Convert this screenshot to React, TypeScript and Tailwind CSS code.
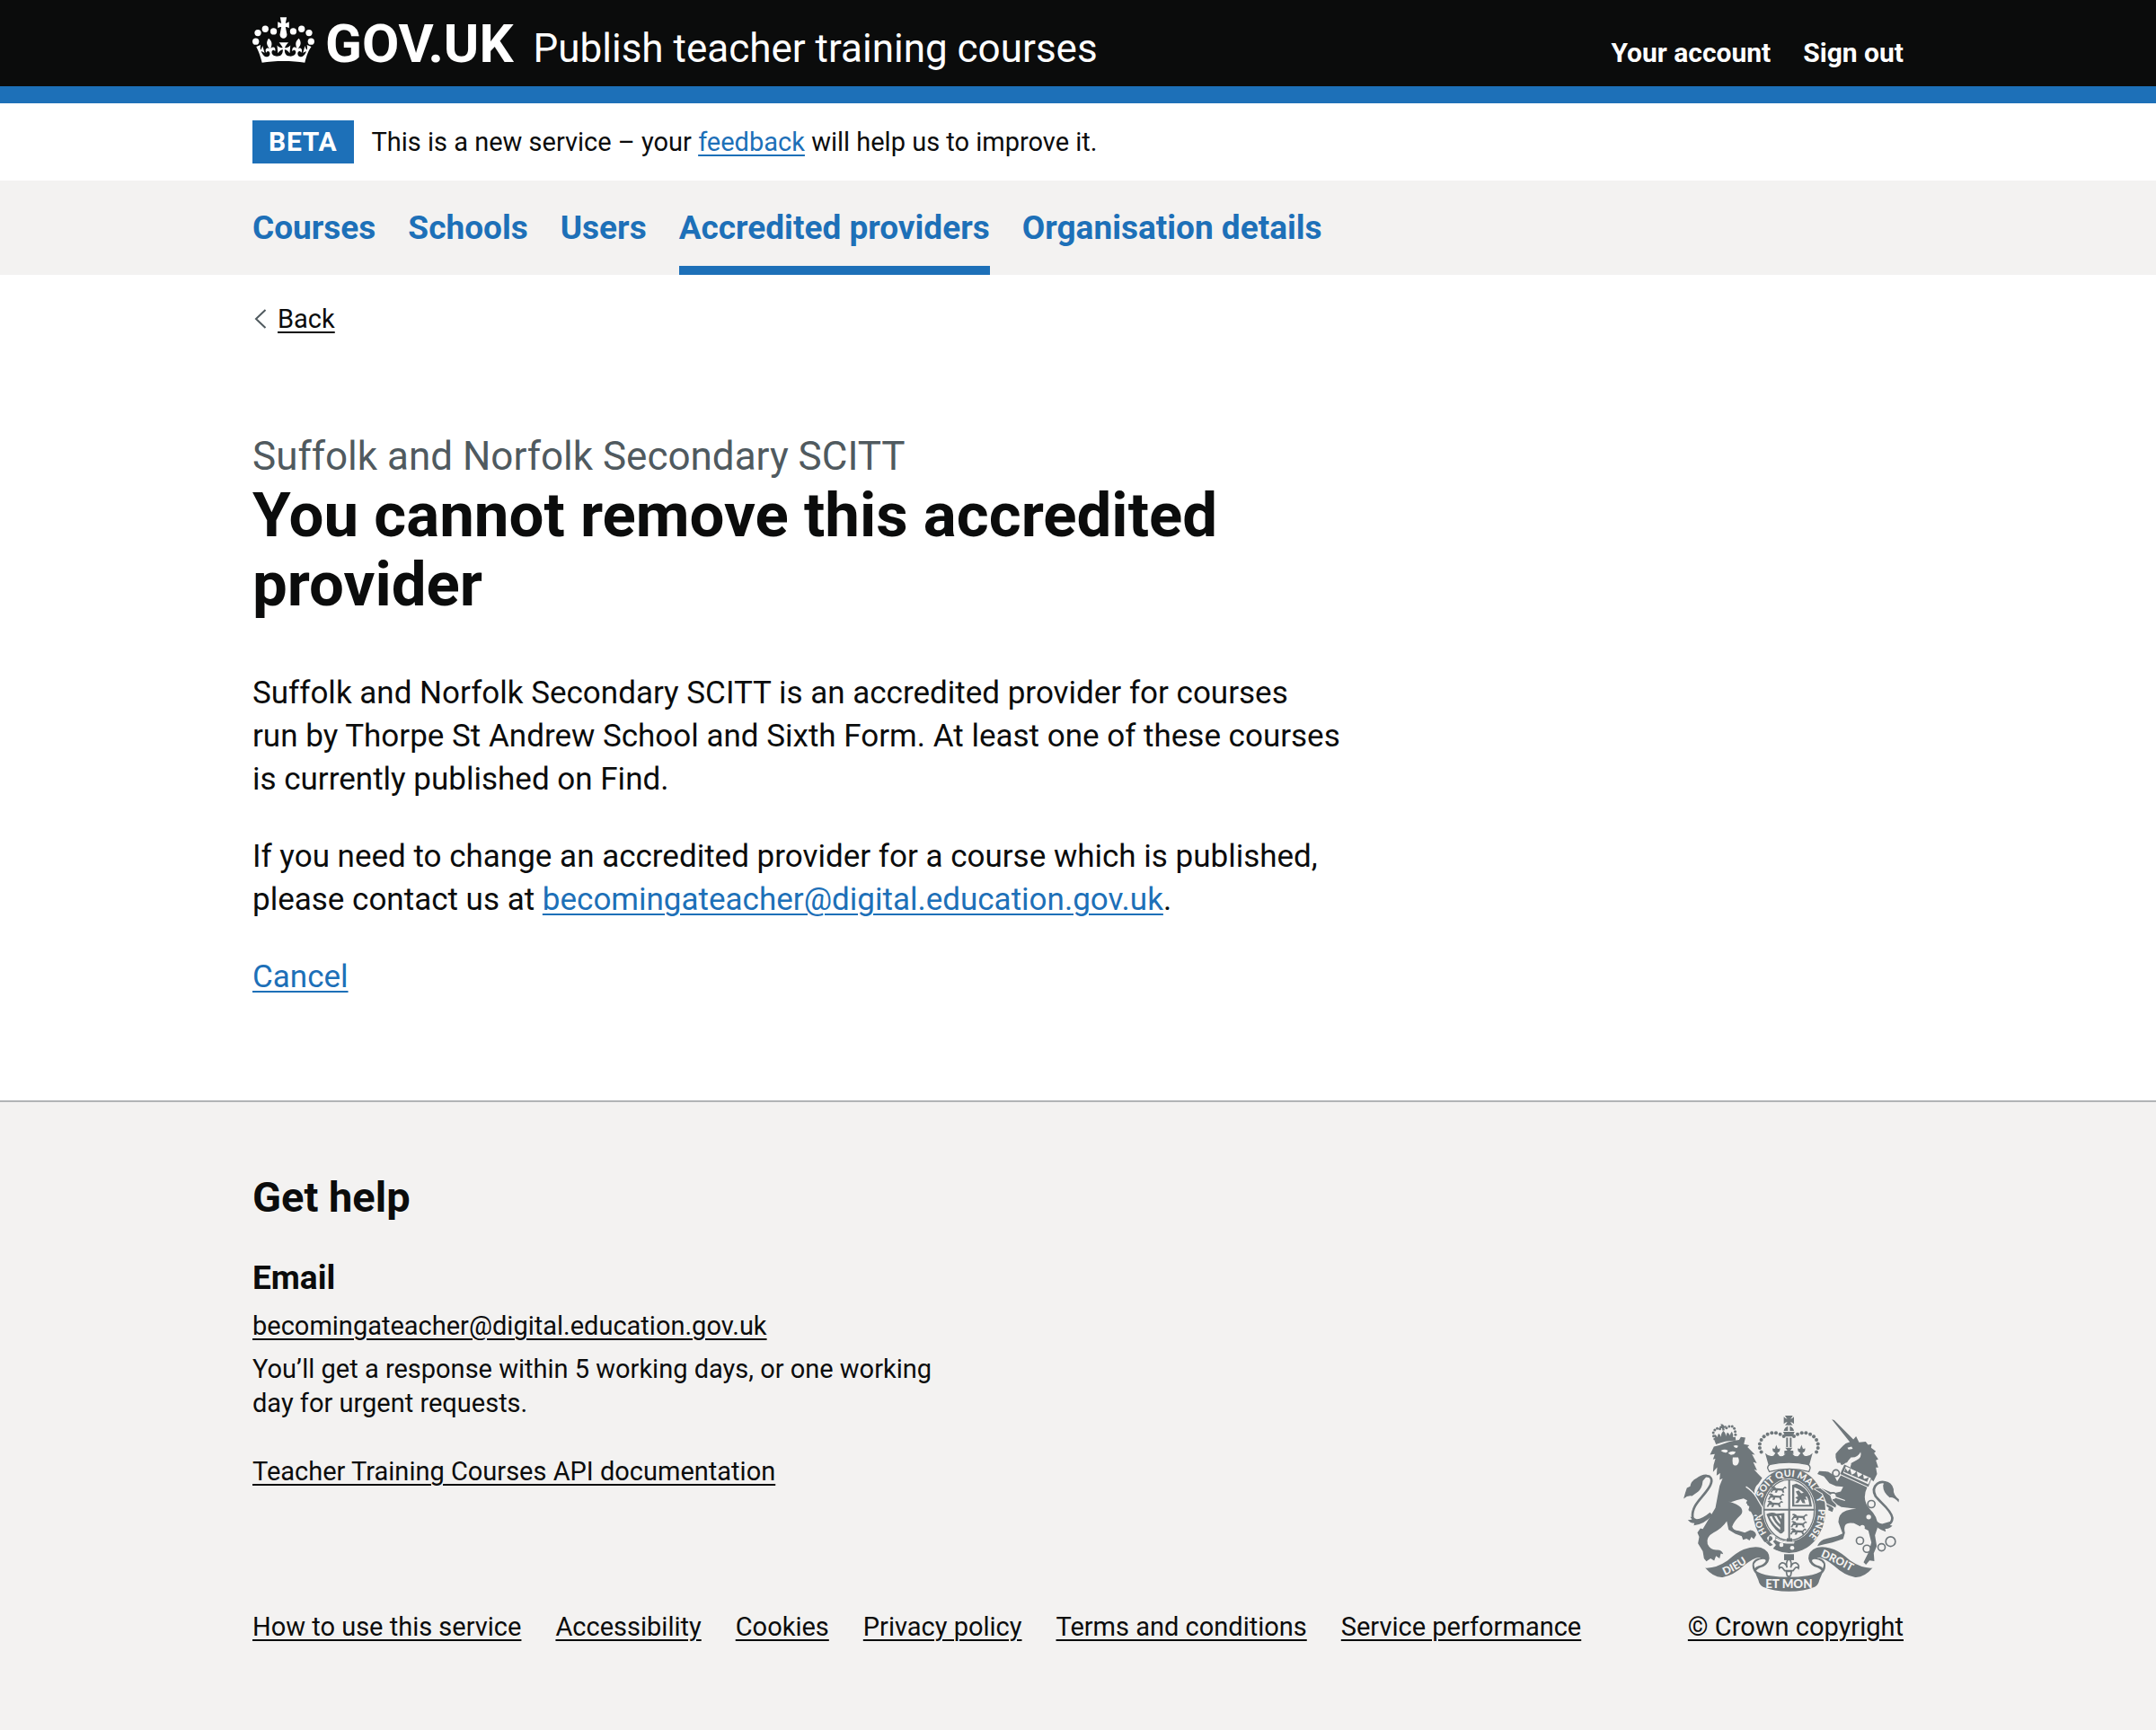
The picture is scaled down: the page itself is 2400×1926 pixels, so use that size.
import type { ReactNode } from "react";

const EMAIL = "becomingateacher@digital.education.gov.uk";

const NAV = [
  { label: "Courses" },
  { label: "Schools" },
  { label: "Users" },
  { label: "Accredited providers", current: true },
  { label: "Organisation details" },
];

const FOOTER_LINKS = [
  "How to use this service",
  "Accessibility",
  "Cookies",
  "Privacy policy",
  "Terms and conditions",
  "Service performance",
];

function Container({ children, className = "" }: { children: ReactNode; className?: string }) {
  return <div className={`mx-auto w-full max-w-[1838px] ${className}`}>{children}</div>;
}

function CrownLogo({ className = "" }: { className?: string }) {
  const pearls = [
    [43, 111],
    [50, 82],
    [75, 69],
    [103, 77],
  ];
  return (
    <svg viewBox="32 29 208 154" className={className} fill="currentColor" role="img" aria-label="Crown">
      {pearls.map(([x, y]) => (
        <g key={x}>
          <circle cx={x} cy={y} r="11" />
          <circle cx={272 - x} cy={y} r="11" />
        </g>
      ))}
      <path d="M125 30h22l-4 20q6-1 12-5v21q-6-4-12-4l5 26a12 13 0 1 1-24 0l5-26q-6 0-12 4V45q6 4 12 5z" />
      <g transform="translate(42.4 -1) scale(5.85 6.1)">
        <path d="M16 29.2c4.4 0 8.6.3 12.3.8 1.1-4.5 2.4-7 3.7-8.8l-2.5-.9c.2 1.3.3 1.9 0 2.7-.4-.4-.8-1.1-1.1-2.3l-1.2 4c.7-.5 1.3-.8 2-.9-1.1 2.5-2.6 3.1-3.5 3-1.1-.2-1.7-1.2-1.5-2.1.3-1.2 1.5-1.5 2.1-.1 1.1-2.3-.8-3-2-2.3 1.9-1.9 2.1-3.5.6-5.6-2.1 1.6-2.1 3.2-1.2 5.5-1.2-1.4-3.2-.6-2.5 1.6.9-1.4 2.1-.5 1.9.8-.2 1.1-1.7 2.1-3.5 1.9-2.7-.2-2.9-2.1-2.9-3.6.7-.1 1.9.5 2.9 1.9l.4-4.3c-1.1 1.1-2.1 1.4-3.2 1.4.4-1.2 2.1-3 2.1-3h-5.4s1.7 1.9 2.1 3c-1.1 0-2.1-.2-3.2-1.4l.4 4.3c1-1.4 2.2-2 2.9-1.9-.1 1.5-.2 3.4-2.9 3.6-1.9.2-3.4-.8-3.5-1.9-.2-1.3 1-2.2 1.9-.8.7-2.3-1.2-3-2.5-1.6.9-2.2.9-3.9-1.2-5.5-1.5 2-1.3 3.7.6 5.6-1.2-.7-3.1 0-2 2.3.6-1.4 1.8-1.1 2.1.1.2.9-.3 1.9-1.5 2.1-.9.2-2.4-.5-3.5-3 .6 0 1.2.3 2 .9l-1.2-4c-.3 1.1-.7 1.9-1.1 2.3-.3-.8-.2-1.4 0-2.7l-2.5.9C1.3 23 2.6 25.5 3.7 30c3.7-.5 7.9-.8 12.3-.8z" />
      </g>
    </svg>
  );
}

const G = "#6f777b";
const L = "#f3f2f1";

/* One heraldic beast passant, reused for the quarterings of the shield. */
function Passant({ x, y }: { x: number; y: number }) {
  return (
    <path
      transform={`translate(${x} ${y})`}
      d="M0 2l6-2 7 3 3 4 22 1 8-7 6 4-3 3-4-1-4 6 3 9h-6l-3-7-13-1-3 8h-7l3-8-9 1-4 7-5-2 6-10 3-4-5-1z"
    />
  );
}

function RoyalArms({ className = "" }: { className?: string }) {
  const arch = [
    [376, 122], [364, 115], [350, 111], [336, 111], [322, 115], [310, 123],
    [301, 134], [296, 147], [296, 161], [301, 174],
  ];
  const smallArch = [
    [146, 131], [142, 121], [141, 110], [146, 101], [154, 96], [163, 97],
    [185, 94], [194, 89], [204, 89], [211, 96], [214, 106], [215, 117],
  ];
  const links = [
    [550, 245, 11], [540, 322, 12], [668, 348, 12], [630, 470, 12], [653, 497, 12], [702, 492, 12], [732, 473, 16],
  ];
  return (
    <svg
      viewBox="42 50 718 590"
      className={`overflow-visible ${className}`}
      fill={G}
      role="img"
      aria-label="Royal coat of arms"
    >
      <defs>
        <path id="garter-motto" d="M304 328A97 114 0 0 1 491 370A97 114 0 0 1 434 474" />
        <path id="garter-start" d="M319 444A97 114 0 0 1 298 365" />
        <path id="ribbon-left" d="M174 588Q228 566 282 522" />
        <path id="ribbon-right" d="M499 523Q556 546 630 590" />
      </defs>

      {/* lion's crown */}
      {smallArch.map(([x, y]) => (
        <circle key={`${x}-${y}`} cx={x} cy={y} r="4.5" />
      ))}
      <path d="M165 81l8 1 5 6 6-2-1 7-6 1 2 8-7 1-2-8-7 1-1-7 6-2z" />
      <path d="M149 132q-6-10-4-17 6 3 10 10 0-8 4-12 6 4 7 11 2-14 8-20 8 5 9 18 1-8 5-13 6 3 8 10 2-8 7-13 5 8 4 19l8-1 1 12q-36 0-66 13l-5-13z" />

      {/* lion's head, mane and body */}
      <path d="M143 156l18-4q40-16 66-18l6-10 15 2-5 22 18 4-6 6 25 25-10-1 16 30-12-4 13 28-10-3q12 14 27 28l-12 18q-14 12-14 30 18 14 22 40l5 42-14 8-8-14-3 16-8-14-4-14-8-2 6-12-12-8 2-14-14-8q-22 4-42 12l-10-2q34 8 44 22 8 14-2 24-22 20-28 38 2 12 22 14l20 6 18-8q18 2 20 16l-8 14-8-8-6 12-10-6-12 4-4-12-22-8-22-14-6-28q-16 24-44 38-26 14-20 38 8 18 28 20 20-2 24 14l-8-2-4 16-12-8-6 16-12-8-14 10-8-10-4-24-16-26 4-22-6-14 10-14 8 2 42-70 14-74 10-24-10 4 2-22-12 8 2-28-14 16q0-24 8-44l-8 2 6-18-16 2z" />
      <path
        fill={L}
        d="M166 170q14-8 24 0l-4 6q-12 2-20-6zm42-16q8-4 16 0l-4 7q-8 0-12-7zM190 178q12-10 26-4l-6 8-10 2zM206 192l18 0q6 14-2 24-10 8-16-2-2-12 0-22z"
      />
      {/* lion's tail */}
      <path
        fill="none"
        stroke={G}
        strokeWidth="8"
        strokeLinecap="round"
        d="M118 396Q82 418 72 392C68 356 98 332 116 308C134 286 142 266 128 256Q112 250 98 262"
      />
      <path d="M118 249q-20 1-32 12-20 10-22 28l-11 5q-5 14-11 36 14-12 28-9l20-14q14-12 16-36l12-14zM130 376q-26 22-44 22l-22-8 6 10-14 1q10 12 22 10l-2 8q34-2 62-34z" />

      {/* unicorn */}
      <path d="M536 66l8 2 64 64-8 14zM549 180q12-14 24-26 12-12 30-16l14-16 10 20 22-2 8 10 12-2-2 12 16 12-6 6 14 20-8 4 8 24-8 0 4 22-12 24-12-10-58-26-7-12q4-10 2-14-14-4-26 6l-6 2-4-8-10 0-5-18z" />
      <path fill={L} d="M588 160l14-4 4 8-14 2zM600 192q22 2 32-18 6 18-14 28l-26 14-8-2q8-14 16-22z" />
      <path d="M578 216l92 44-12 30-94-42z" />
      <path fill={L} d="M583 222l84 40-9 20-84-38z" />
      <path d="M577 241l5-13 7 12 8-10 5 20 9-4 8-8 4 20 9-4 8-8 3 18 9-2 8-4-6 16z" />
      <path d="M566 252l88 40q-20 42 10 74 28 26 24 62l-8 24 6 36-10 24 2 26-16-2-12 14-8-8 18-36 8-30-10-40-48-24q-40-8-30 32l-6 20-36 12-36 8-14 4q4-14 20-22l46-12 18-8-14-38q0-28 26-38 20-6 34-6l-50-6-32-18-16-16 6 24 16 14-4 12-14-6 2-8-14-8-8-32-24-24q10-8 24 0l38 16 24-6 8-16-24-2-22-10-18-22-22-8 6-10 30 2 20 12 10 20z" />
      <path
        fill="none"
        stroke={G}
        strokeWidth="8"
        strokeLinecap="round"
        d="M694 420Q736 424 738 394C734 366 696 342 682 322Q668 296 688 280 704 268 722 280"
      />
      <path d="M712 272q24 0 30 26-2 20 18 34l-1 10q-16-18-30-16-22-16-22-40zM676 392q10 18 28 22l28-8-4 12 10 2q-10 12-24 10l2 10q-30-8-48-38z" />
      {links.map(([x, y, r]) => (
        <ellipse key={`${x}-${y}`} cx={x} cy={y} rx={r} ry={r} fill={L} stroke={G} strokeWidth="5" />
      ))}
      <circle cx="659" cy="391" r="8" fill={L} />
      <circle cx="638" cy="426" r="8" fill={L} />

      {/* garter */}
      <ellipse cx="394" cy="370" rx="126" ry="146" fill={L} />
      <ellipse cx="394" cy="370" rx="121" ry="141" />
      <ellipse cx="394" cy="368" rx="88" ry="105" fill={L} />
      <ellipse cx="394" cy="368" rx="84" ry="101" fill="none" stroke={G} strokeWidth="4" />
      <g fill={L} fontFamily="Lato" fontWeight="900" fontSize="32">
        <text>
          <textPath href="#garter-motto">SOIT QUI MAL</textPath>
        </text>
        <text>
          <textPath href="#garter-motto" startOffset="242">
            Y
          </textPath>
        </text>
        <text>
          <textPath href="#garter-motto" startOffset="282">
            PENSE
          </textPath>
        </text>
        <text fontSize="29">
          <textPath href="#garter-start">HON</textPath>
        </text>
      </g>
      <path
        fill={L}
        d="M332 448q20 2 16 18l-8 6 10 12-10 12q-12 2-20-10l-14-8 18-6-4-12zM352 462q20 12 40 12h20l-2 6h-24q-24-2-38-12z"
      />
      <circle cx="368" cy="484" r="7" fill={L} />
      <circle cx="404" cy="494" r="7" fill={L} />
      <path d="M328 454q12 0 10 12l-10 8 12 10-10 4-14-12 8-4z" />

      {/* lion's paw over the garter */}
      <path d="M250 290q24 18 34 36l18 34 0 20-12 10-10-12-6 10-8-16-8-4 4-14-12-10 6-12z" />
      <path fill="none" stroke={L} strokeWidth="4" d="M250 290q24 16 34 34l21 36v22l-12 10" />

      {/* unicorn's hoof over the garter */}
      <path
        stroke={L}
        strokeWidth="3"
        d="M580 336l-44-14-38-28q-16-2-20 4l26 16 14 32 20 10 12 6 2-12-14-14-6-18z"
      />

      {/* shield quarterings */}
      <path d="M391 268h6v200h-6zM308 364h172v6h-172zM386 462h18v10h-18z" />
      <Passant x={334} y={288} />
      <Passant x={326} y={312} />
      <Passant x={322} y={336} />
      <Passant x={404} y={380} />
      <Passant x={402} y={404} />
      <Passant x={400} y={428} />
      <path d="M404 284l14-4q32 10 46 42l6 34h-66zM411 292v58h50q-4-42-50-58z" fillRule="evenodd" />
      <path d="M416 306l10-4 8 10 10-2 12 12-8 2 6 10-10-2 4 14-10-2-6-12-8 12-10 0 8-12-8-6 10-4z" />
      <path
        d="M318 382q16-10 34-2l26-2v60q-8 10-14 8-30-20-46-64zM328 390q12 26 36 44v-8q-20-16-28-38zM344 388q8 18 20 28v-8q-8-10-12-20zM360 386l8 12v-12z"
        fillRule="evenodd"
      />

      {/* royal crown */}
      <path d="M380 53h26q-4 8-8 11 6 0 12-7v24q-6-6-12-7 3 6 8 11h-26q5-5 8-11-7 1-12 7V57q6 7 12 7-4-3-8-11z" />
      <path d="M376 104q2-14 17-16 15 2 17 16zM374 107h38l-6 16h-26zM384 126h6v32h-6zM396 126h6v32h-6z" />
      <path fill={L} d="M390 88h6v16h-6z" />
      {arch.map(([x, y]) => (
        <g key={`${x}-${y}`}>
          <circle cx={x} cy={y} r="6" />
          <circle cx={786 - x} cy={y} r="6" />
        </g>
      ))}
      <path d="M314 178q14 14 28 8l6-8-8-6-2-10 8 2 5-14 5 14 8-2-2 10-8 6 8 10q12 2 20-8l-4-10h30l-4 10q8 10 20 8l8-10-8-6-2-10 8 2 5-14 5 14 8-2-2 10-8 6 6 8q14 6 28-8l-10 36-3 8q-66-16-132 0l-3-8z" />
      <path
        fill={L}
        stroke={G}
        strokeWidth="4"
        d="M330 216q63-14 126 0 8 4 8 12l-4 12q-66-18-132 0l-6-12q0-8 8-12z"
      />
      <path d="M381 160h24l-7 9 10 3v10l-10-3 3 7h-16l3-7-10 3v-10l10-3z" />

      {/* motto ribbon */}
      {[0, 1].map((side) => (
        <g key={side} transform={side ? "translate(786 0) scale(-1 1)" : undefined}>
          <path d="M114 561q36 2 74-24 30-28 54-38 32-12 58-6 28 10 28 36-4 24-32 32-14 6-14 18-14-14-10-34 4-12 18-16l10-2q-20-4-58 27-34 32-70 38-30 2-58-31z" />
          <path fill={L} d="M294 534q22-6 22 4-6 12-24 16-10 4-12 8-10-18 14-28z" />
        </g>
      ))}
      <path d="M277 566q20 16 54 21 62 9 124 0 34-5 54-21-8 22-14 34-4 18-16 24-36 15-86 15t-86-15q-12-6-16-24-6-12-14-34z" />
      <g fill={L} fontFamily="Lato" fontWeight="900" fontSize="36">
        <text>
          <textPath href="#ribbon-left" startOffset="6">
            DIEU
          </textPath>
        </text>
        <text>
          <textPath href="#ribbon-right">DROIT</textPath>
        </text>
        <text x="393" y="627" textAnchor="middle" fontSize="40">
          ET MON
        </text>
      </g>

      {/* fleur-de-lis */}
      <path d="M377 515h33v20h-33z" />
      <path
        fill={L}
        stroke={G}
        strokeWidth="5"
        d="M393 530q-12 10-6 30-4-18-18-16-12 6-8 18 4-6 10-2l8 10h28l8-10q6-4 10 2 4-12-8-18-14-2-18 16 6-20-6-30zM384 572h18l-3 14a7 7 0 0 1-12 0z"
      />
    </svg>
  );
}

function FooterLink({ children }: { children: ReactNode }) {
  return (
    <a href="#" className="underline decoration-2 underline-offset-4">
      {children}
    </a>
  );
}

export default function App() {
  return (
    <div className="flex min-h-screen flex-col bg-white font-['Roboto',sans-serif] text-[29px] leading-[38px] text-[#0b0c0c]">
      <header className="border-b-[19px] border-[#1d70b8] bg-[#0b0c0c] text-white">
        <Container className="flex h-24 items-baseline justify-between pt-[19px]">
          <div className="flex items-baseline">
            <a href="#" className="flex gap-3">
              <CrownLogo className="h-[51px] w-[69px]" />
              <span className="self-baseline text-[60px] leading-none font-bold">GOV.UK</span>
            </a>
            <a href="#" className="ml-[22px] text-[44px] leading-none">
              Publish teacher training courses
            </a>
          </div>
          <nav aria-label="Account" className="flex gap-9 text-[30px] leading-[38px] font-bold">
            <a href="#">Your account</a>
            <a href="#">Sign out</a>
          </nav>
        </Container>
      </header>

      <Container className="flex items-center gap-5 py-[19px]">
        <strong className="bg-[#1d70b8] px-[18px] text-[30px] leading-[48px] font-bold tracking-wide text-white">
          BETA
        </strong>
        <span>
          This is a new service – your{" "}
          <a href="#" className="text-[#1d70b8] underline decoration-2 underline-offset-4">
            feedback
          </a>{" "}
          will help us to improve it.
        </span>
      </Container>

      <nav aria-label="Primary" className="bg-[#f3f2f1]">
        <Container>
          <ul className="flex gap-9 text-[37px] leading-[48px] font-bold text-[#1d70b8]">
            {NAV.map(({ label, current }) => (
              <li key={label}>
                <a
                  href="#"
                  aria-current={current ? "page" : undefined}
                  className={`block border-b-[10px] pt-[29px] pb-[18px] ${current ? "border-[#1d70b8]" : "border-transparent"}`}
                >
                  {label}
                </a>
              </li>
            ))}
          </ul>
        </Container>
      </nav>

      <Container className="pt-[30px]">
        <a href="#" className="flex w-fit items-center gap-3">
          <svg
            viewBox="0 0 14 22"
            className="ml-0.5 h-[22px] w-3.5"
            fill="none"
            stroke="#505a5f"
            strokeWidth="2"
            aria-hidden="true"
          >
            <path d="M12.5 1L2 11l10.5 10" />
          </svg>
          <span className="underline decoration-2 underline-offset-4">Back</span>
        </a>

        <main className="max-w-[1226px] pt-[107px] pb-[113px] text-[35px] leading-[48px]">
          <span className="block text-[44px] leading-[54px] text-[#505a5f]">Suffolk and Norfolk Secondary SCITT</span>
          <h1 className="mb-[59px] text-[69px] leading-[77px] font-bold">You cannot remove this accredited provider</h1>
          <p className="mb-[38px]">
            Suffolk and Norfolk Secondary SCITT is an accredited provider for courses
            <br />
            run by Thorpe St Andrew School and Sixth Form. At least one of these courses is currently published on Find.
          </p>
          <p className="mb-[38px]">
            If you need to change an accredited provider for a course which is published, please contact us at{" "}
            <a href={`mailto:${EMAIL}`} className="text-[#1d70b8] underline decoration-2 underline-offset-4">
              {EMAIL}
            </a>
            .
          </p>
          <p>
            <a href="#" className="text-[#1d70b8] underline decoration-2 underline-offset-4">
              Cancel
            </a>
          </p>
        </main>
      </Container>

      <footer className="grow border-t-2 border-[#b1b4b6] bg-[#f3f2f1]">
        <Container className="pt-[77px] pb-20">
          <h2 className="mb-[38px] text-[47px] leading-[57px] font-bold">Get help</h2>
          <h3 className="mb-2.5 text-[37px] leading-[48px] font-bold">Email</h3>
          <p className="mb-2.5">
            <FooterLink>{EMAIL}</FooterLink>
          </p>
          <p className="mb-[38px] max-w-[800px]">
            You’ll get a response within 5 working days, or one working day for urgent requests.
          </p>
          <div className="flex items-end justify-between">
            <div>
              <p className="mb-[135px]">
                <FooterLink>Teacher Training Courses API documentation</FooterLink>
              </p>
              <ul className="flex gap-[38px]">
                {FOOTER_LINKS.map((label) => (
                  <li key={label}>
                    <FooterLink>{label}</FooterLink>
                  </li>
                ))}
              </ul>
            </div>
            <div className="-mt-16 flex w-[250px] flex-col items-end">
              <RoyalArms className="mb-5 h-[197px] w-full" />
              <FooterLink>© Crown copyright</FooterLink>
            </div>
          </div>
        </Container>
      </footer>
    </div>
  );
}
